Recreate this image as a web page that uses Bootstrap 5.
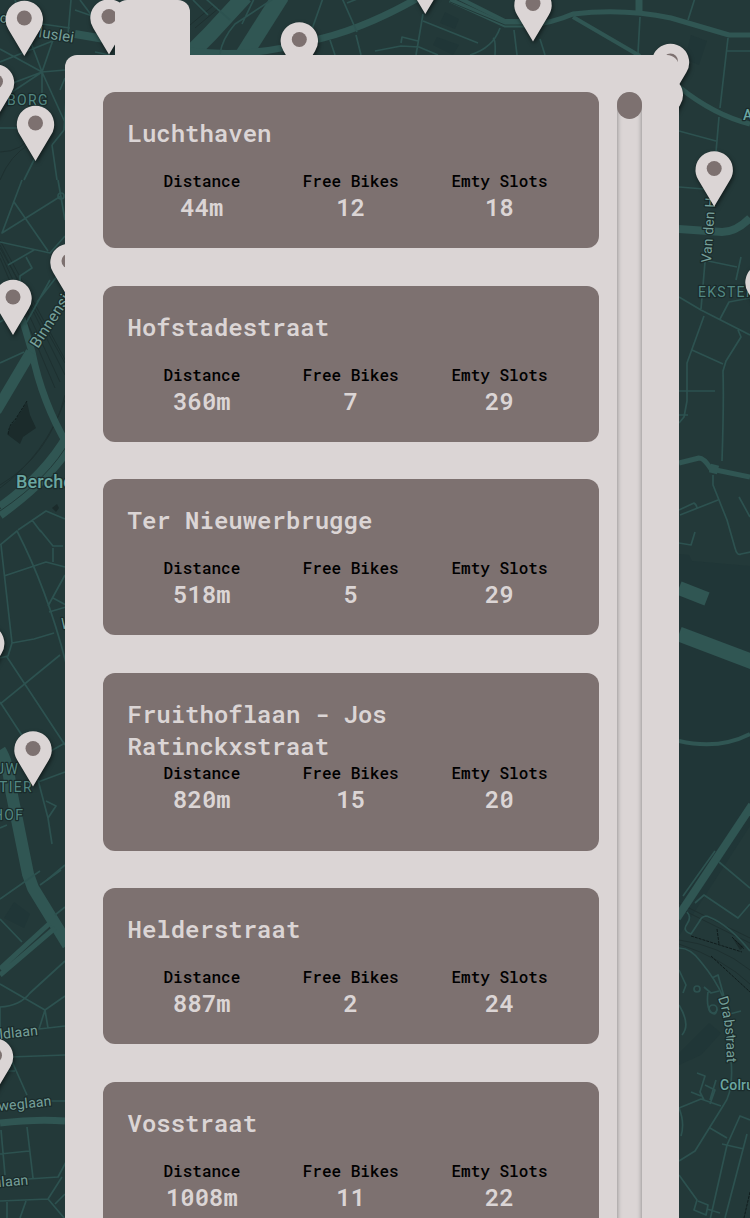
<!DOCTYPE html>
<html lang="en">
<head>
<meta charset="utf-8">
<meta name="viewport" content="width=device-width, initial-scale=1">
<title>Bike stations</title>
<link href="https://cdn.jsdelivr.net/npm/bootstrap@5.3.0/dist/css/bootstrap.min.css" rel="stylesheet">
<style>
  :root { --pale: #dbd5d5; --taupe: #7d7170; }
  body { background: #233939; font-family: "Roboto Mono", "DejaVu Sans Mono", monospace; }
  .app { height: 1218px; width: 750px; }
  .map { inset: 0; }
  .map .minor { stroke: #2d5250; stroke-width: 1.7; }
  .map .major { stroke: #305653; stroke-width: 9; }
  .map .rail { stroke: #1e3030; stroke-width: 1; }
  .map text { font-family: "Roboto", sans-serif; fill: #76a09a; stroke: #1a2b2b; stroke-width: 2.5px; paint-order: stroke; font-size: 14px; letter-spacing: .15px; }
  .map .area { fill: #528782; letter-spacing: 1.3px; }
  .map .town { fill: #6ba7a2; font-weight: 500; }
  .pin { fill: var(--pale); filter: drop-shadow(1px 2px 2px rgba(0,0,0,.55)); }
  .tab-handle { height: 55px; width: 75px; margin-left: 115px; background: var(--pale); border-radius: 12px 12px 0 0; }
  .panel { height: 1163px; width: 614px; margin-left: 65px; padding: 37.25px 37.2px 0 37.7px; gap: 18px; background: var(--pale); border-radius: 12px 12px 0 0; }
  .stations { width: 496px; gap: 37.6px; }
  .station { display: grid; grid-auto-rows: 1fr; flex: none; padding: 24.85px 24.8px 24.95px; background: var(--taupe); border-radius: 12px; }
  .station h2 { font-size: 24px; line-height: 32px; font-weight: 600; color: var(--pale); }
  .stat-label { font-size: 16px; line-height: 21.1px; font-weight: 500; color: #000; }
  .stat-value { font-size: 24px; line-height: 32px; font-weight: 600; color: var(--pale); }
  .track { width: 25px; height: 1180px; border-radius: 12.5px; box-shadow: inset 0 0 5px #808080; }
  .thumb { height: 27px; border-radius: 12.5px; background: var(--taupe); }
</style>
</head>
<body class="overflow-hidden">
<div class="app position-relative overflow-hidden">
  <svg class="map position-absolute" width="750" height="1218" viewBox="0 0 750 1218" fill="none" stroke-linejoin="round">
    <defs>
      <g id="pin"><path d="M0 0L-15.8-26.5A18.7 18.7 0 1 1 15.8-26.5Z"/><circle cy="-38" r="7.5" fill="#7d7170"/></g>
    </defs>
    <path fill="#203637" d="M679 554l10 1 3 6 58 5v260l-71 110z M445 12l14 7-4 10-15-6zM437 37l22 8-6 10-20-10zM691 35l16 6-8 24-14-6zM14 902l16 12-6 14-20-10zM679 1053l30-30 12 10-20 22-22 10z"/>
    <!-- railways -->
    <g class="rail">
      <path d="M0 245l65 130M0 240l68 125M0 252l60 130M0 258l55 130M0 248l65 115M0 152q22 0 35-20M0 180q10-25 30-36M65 395q-15 60-65 90M65 400q-20 55-65 88M190 25l24-20M195 28l24-20M679 940q40 5 71 30M679 944q45 15 71 40M679 903q40 20 71 35M679 908q40 20 71 35"/>
    </g>
    <!-- dark features -->
    <path fill="#1b2b2b" d="M27 402l-12 19q-5 3-7 14l12 9 3-7 13-9-6-13zM52 508l5-4 2 4-3 4zM732 937l12 10-4 3z"/>
    <path stroke="#101c1c" stroke-dasharray="3 1" d="M27 401L15 420q-6 4-7 15M691 936l51 16M717 929l2 15M732 937l12 12M711 956l39 36M750 1192l-6 26"/>
    <!-- main roads -->
    <g class="major">
      <path d="M22 318l10 34q10 50 36 94" stroke-width="7"/>
      <path d="M-4 411L31 352" stroke-width="11"/>
      <path d="M0 507Q45 475 68 435M0 515Q48 480 70 446"/>
      <path d="M0 750q8 12 11 40l17 84 5 14L68 945" stroke-width="12"/>
      <path d="M0 969L50 923M0 975L55 928" stroke-width="5"/>
      <path d="M0 1123q35-4 65-2" stroke-width="7"/>
      <path d="M190 54q10-10 20-20L245-4" stroke-width="16"/>
      <path d="M243 56L281-4" stroke-width="17"/>
      <path d="M190 51q60 8 120-10 50-10 108-43" stroke-width="7"/>
      <path d="M450 0l55 25h25q22-2 43-11 50-6 98 4l58 17h25" stroke-width="5"/>
      <path d="M455-4l50 25h20M573 17l67 39" stroke-width="4"/>
      <path d="M639-2V12" stroke-width="7"/>
      <path d="M679 87q35 28 71 37" stroke-width="5"/>
      <path d="M679 229l43 3q14 0 28-14" stroke-width="8"/>
      <path d="M679 463l20-5q5 0 12 11l39 8" stroke-width="5"/>
      <path d="M710 468l8 2" stroke-width="9"/>
      <path d="M679 588l28 11" stroke-width="14"/>
      <path d="M679 634l74 28" stroke-width="15"/>
      <path d="M679 741q40 9 71-7" stroke-width="4"/>
      <path d="M677 918L752 805" stroke-width="8"/>
      <path d="M75 34l41 7" stroke-width="8"/>
    </g>
    <path stroke="#223a39" d="M0 511Q50 477 70 440M450 2l55 23h20"/>
    <!-- side streets -->
    <g class="minor">
      <path d="M0 18l70 10M71 0l-3 34-18 8-50 20M42 72L0 49M42 72L15 0M42 72l12-35M42 72l70-6M42 72l26 57M42 72v60M42 72L0 100M42 72L0 88M64 130L68 70M60 90l5-12M0 128h18M52 145l12-15M52 145l5 35M34 160l-10 20M80 0l15 20M75 10l23 8M110 55l-15-3"/>
      <path d="M22 180L2 233l59-37M14 202l34 49M0 242l50 11 15-17M58 180l7 40M8 265l26-15M26 257l6 11-12 8v12M0 322l25-15M25 325l25-45M37 302l28-36M0 363l24-11M18 530l28-19 19 8M32 520l9 12"/>
      <circle cx="61" cy="196" r="3"/>
      <path d="M0 545l17-14q30 58 49 132M1 545l11 98-4 13-8 2M4 576l42-14 19 5M40 530l13 16h10M53 548v14M65 575l-17 31M53 598l13 7M49 612l17-5M12 643l22-4 20-6M0 704l60-49M7 657l58 88M0 702l23 35M40 757l25-14M38 782l27-10M38 780l10 38 8-12-10-5M48 818l4 26M0 828l7-3M65 865l-18 15"/>
      <path d="M0 899l40-28M40 885l21-15M0 919l22 23M55 915l10-8M0 984l45 26 20-14M0 1007q20-1 30-14l35-32M45 1010l-6 19 26-3M45 1010l3 18M0 1007v30M10 1057l55-2M10 1057l17 38M50 1101h15M5 1071h10M1 1130l4 45M0 1154l29-3M27 1127l6 51M28 1179l30-2 8-15M0 1201l48-2 17 20M48 1199l14-22M26 1201l-6 17M7 1202v16M55 1204l10-10"/>
      <path d="M220 54q2-15 15-30l38-25M242 24l12-25M193 0l15 15M205-2l25 22M323-2l-12 34M342-2l15 34M347 3l20-8M330 40l5 15M356 35l5 20M423 14l-7 41M375 51l26-5 18 1 19 8M401 43l1-6 16 4M423 21l55 22M500 28q-7 20-30 27M493 38q3 2 2 17M514 30l3 25M540 39l5 16M640 17l-2 36M695-2l-7 22M728 38l-8 70M727 51h23M719 117l-3 35M679 131l37 10"/>
      <path d="M679 187l25 2M705 262l-4 47M708 261l29 6M741 257l-5 23M679 297l22 13 49 25M704 316l-17 47v38l-3 16-5 6M692 350l31 14M720 319l9-17 21-4M738 330l3 7-15 24-3 10q1 30-1 90M679 391h36M679 415h9M713 475v10l14 35 8 28q2 8 6 6l10-2M680 515l38-15M679 510l15-7q3 2 3 6M679 543l12 2 4-13M739 497l11 20"/>
      <path d="M683 896l32-45M695 903l9-8 34 23 12-14M719 862l31 26M687 912q5 5 0 12t4 10l8-12q4-8 10-5 20 8 41 34M679 948q12 0 22 14 15 18 22 35M712 978l6-3 7 25M704 987l7 6 8-2M708 992q-2 15 3 20t6-3M679 970l7 15-3 8M679 1005q12 20 3 30M741 1011l-15 4M731 1060q3 32-8 46L695 1151l-16 10M679 1108l22-9 20 7M697 1073l8 3-5 16 4 8M705 1085l10 5-5 14M716 1080l-6 20M691 1092l10 4M679 1108q6 15 2 28M710 1128l17 10M750 1120l-10-4-13 29-17 75M722 1144l22 5M747 1134l-22 84M679 1175l18 25-3 10 12 5 2-10-10-4M720 1213l-13-4"/>
      <circle cx="697" cy="989" r="3"/><circle cx="713" cy="1009" r="4"/>
    </g>
    <!-- place names -->
    <text x="-18" y="22" transform="rotate(9 0 22)">Apo</text>
    <text x="38" y="37" style="font-size:15px" transform="rotate(9 38 37)">luslei</text>
    <text class="area" x="7" y="105">BORG</text>
    <text x="38" y="349" style="font-size:15.5px" transform="rotate(-57 38 349)">Binnensingel</text>
    <text class="town" x="16" y="488" style="font-size:18px">Berchem</text>
    <text x="61" y="629">W</text>
    <text class="area" x="-5" y="774">UW</text>
    <text class="area" x="-1" y="792">TIER</text>
    <text class="area" x="-7" y="820">HOF</text>
    <text x="0" y="1039" transform="rotate(-6 0 1039)">ldlaan</text>
    <text x="-1" y="1111" transform="rotate(-6 0 1111)">weglaan</text>
    <text x="-6" y="1187" transform="rotate(-5 0 1187)">ulaan</text>
    <text class="town" x="743" y="120">A</text>
    <text x="711" y="263" transform="rotate(-86 711 263)">Van den H</text>
    <text class="area" x="698" y="297">EKSTER</text>
    <text transform="translate(718 998) rotate(72)">D</text>
    <text transform="translate(721 1007) rotate(78)">ra</text>
    <text transform="translate(724 1020) rotate(83)">bst</text>
    <text transform="translate(726 1038) rotate(88)">raat</text>
    <text class="town" x="720" y="1090">Colruyt</text>
    <!-- station pins -->
    <g class="pin">
      <use href="#pin" x="24.3" y="56"/><use href="#pin" x="109" y="54.5"/><use href="#pin" x="-4.5" y="119.5"/>
      <use href="#pin" x="35.5" y="161"/><use href="#pin" x="299.3" y="77.5"/><use href="#pin" x="425.3" y="14"/>
      <use href="#pin" x="533" y="41.5"/><use href="#pin" x="670.5" y="99"/><use href="#pin" x="664.3" y="131.5"/>
      <use href="#pin" x="714.2" y="206.5"/><use href="#pin" x="69" y="299"/><use href="#pin" x="13" y="335"/>
      <use href="#pin" x="764" y="319"/><use href="#pin" x="-14.3" y="680"/><use href="#pin" x="33" y="786.5"/>
      <use href="#pin" x="-5.5" y="1093.5"/>
    </g>
  </svg>

  <div class="position-relative">
    <div class="tab-handle"></div>
    <main class="panel d-flex">
      <div class="stations d-flex flex-column flex-shrink-0" id="stations"></div>
      <div class="track flex-shrink-0"><div class="thumb"></div></div>
    </main>
  </div>
</div>

<script src="https://cdn.jsdelivr.net/npm/bootstrap@5.3.0/dist/js/bootstrap.bundle.min.js"></script>
<script>
  const stations = [
    ["Luchthaven", 44, 12, 18],
    ["Hofstadestraat", 360, 7, 29],
    ["Ter Nieuwerbrugge", 518, 5, 29],
    ["Fruithoflaan - Jos Ratinckxstraat", 820, 15, 20],
    ["Helderstraat", 887, 2, 24],
    ["Vosstraat", 1008, 11, 22]
  ];
  const stat = (label, value) =>
    `<div class="col"><div class="stat-label">${label}</div><div class="stat-value">${value}</div></div>`;
  document.getElementById("stations").innerHTML = stations.map(([name, distance, bikes, slots]) =>
    `<article class="station"><h2 class="m-0">${name}</h2><div class="row g-0 text-center">` +
    stat("Distance", distance + "m") + stat("Free Bikes", bikes) + stat("Emty Slots", slots) +
    `</div></article>`).join("");
</script>
</body>
</html>
